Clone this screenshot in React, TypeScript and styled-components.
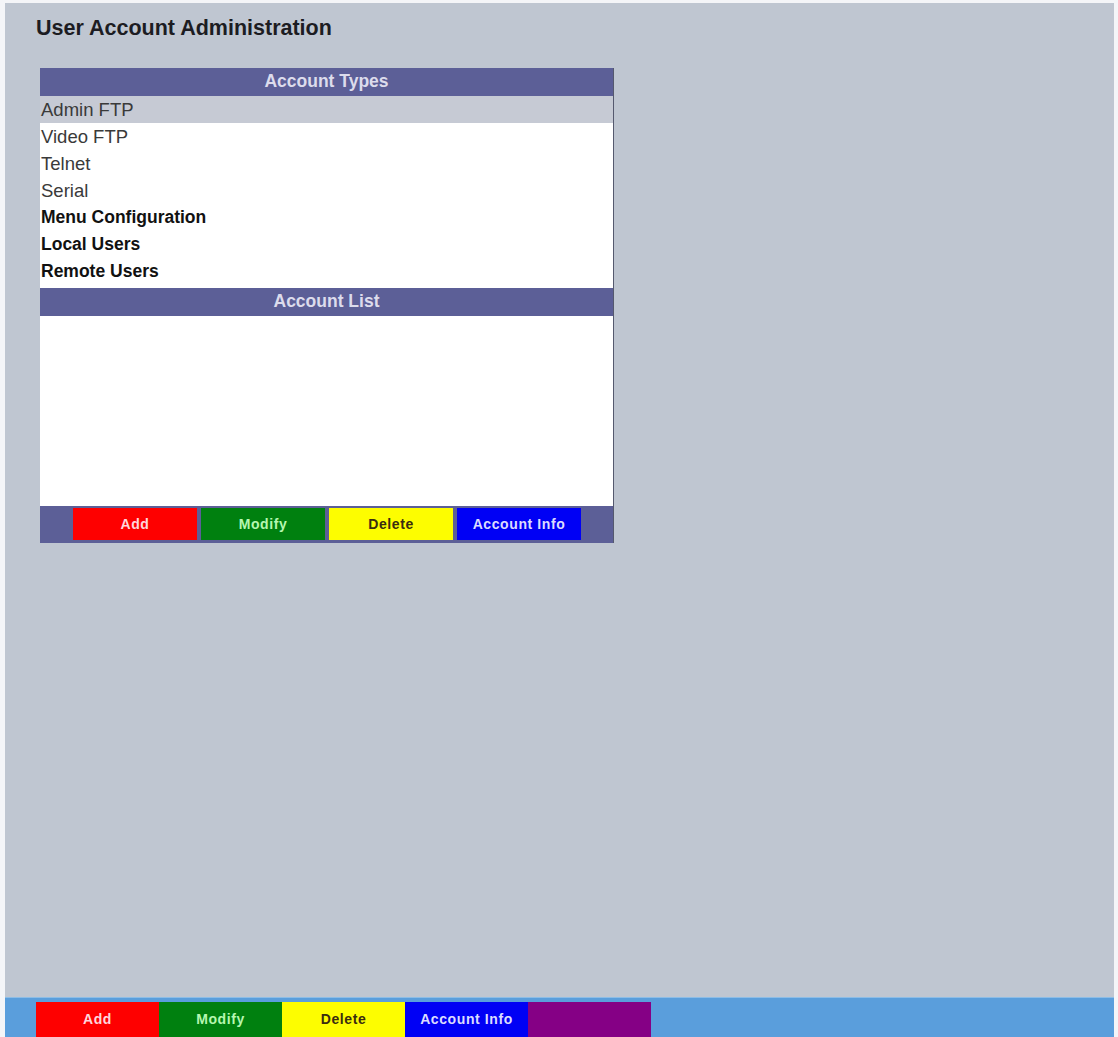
import styled, { createGlobalStyle } from "styled-components";

const GlobalStyle = createGlobalStyle`
  html, body {
    margin: 0;
    padding: 0;
    background: #f4f5f8;
  }
  body {
    font-family: "Liberation Sans", Arial, sans-serif;
  }
`;

type Tone = "red" | "green" | "yellow" | "blue" | "purple";

const tones: Record<Tone, { bg: string; fg: string }> = {
  red: { bg: "#fe0000", fg: "#ffd6dc" },
  green: { bg: "#00800f", fg: "#b6f7b0" },
  yellow: { bg: "#fdfd00", fg: "#3a2c10" },
  blue: { bg: "#0000f5", fg: "#dcdcff" },
  purple: { bg: "#850085", fg: "#ffffff" },
};

const accountTypes = [
  { label: "Admin FTP", bold: false, selected: true },
  { label: "Video FTP", bold: false },
  { label: "Telnet", bold: false },
  { label: "Serial", bold: false },
  { label: "Menu Configuration", bold: true },
  { label: "Local Users", bold: true },
  { label: "Remote Users", bold: true },
];

const actions: { label: string; tone: Tone }[] = [
  { label: "Add", tone: "red" },
  { label: "Modify", tone: "green" },
  { label: "Delete", tone: "yellow" },
  { label: "Account Info", tone: "blue" },
];

export default function App() {
  return (
    <Frame>
      <GlobalStyle />
      <Screen>
        <Content>
          <Title>User Account Administration</Title>
          <Panel>
            <SectionHeader>Account Types</SectionHeader>
            <TypeList>
              {accountTypes.map((t) => (
                <TypeRow key={t.label} $bold={t.bold} $selected={!!t.selected}>
                  {t.label}
                </TypeRow>
              ))}
            </TypeList>
            <SectionHeader>Account List</SectionHeader>
            <AccountArea />
            <ActionBar>
              {actions.map((a) => (
                <ActionButton key={a.label} $tone={a.tone}>
                  {a.label}
                </ActionButton>
              ))}
            </ActionBar>
          </Panel>
        </Content>
        <Footer>
          {actions.map((a) => (
            <FooterButton key={a.label} $tone={a.tone}>
              {a.label}
            </FooterButton>
          ))}
          <FooterButton $tone="purple" />
        </Footer>
      </Screen>
    </Frame>
  );
}

const Frame = styled.div`
  padding: 3px 4px 0 5px;
  height: 1037px;
  box-sizing: border-box;
`;

const Screen = styled.div`
  height: 100%;
  display: flex;
  flex-direction: column;
  background: #bfc6d1;
`;

const Content = styled.div`
  flex: 1;
  padding: 13px 0 0 31px;
`;

const Title = styled.h1`
  margin: 0;
  font-size: 21.5px;
  line-height: 24px;
  font-weight: bold;
  color: #1c1c22;
`;

const Panel = styled.div`
  margin: 28px 0 0 4px;
  width: 574px;
  background: #ffffff;
  border-right: 1px solid #55596e;
  box-sizing: border-box;
`;

const SectionHeader = styled.div`
  height: 28px;
  line-height: 26px;
  background: #5c5f97;
  color: #dcdcec;
  font-weight: bold;
  font-size: 17.5px;
  text-align: center;
`;

const TypeList = styled.div`
  display: flex;
  flex-direction: column;
  padding-bottom: 3px;
`;

const TypeRow = styled.div<{ $bold: boolean; $selected: boolean }>`
  height: 27px;
  line-height: 27px;
  padding-left: 1px;
  font-size: ${(p) => (p.$bold ? "17.5px" : "18.5px")};
  font-weight: ${(p) => (p.$bold ? "bold" : "normal")};
  color: ${(p) => (p.$bold ? "#111111" : "#3a3a3a")};
  background: ${(p) => (p.$selected ? "#c6cad4" : "#ffffff")};
`;

const AccountArea = styled.div`
  height: 190px;
  background: #ffffff;
`;

const ActionBar = styled.div`
  display: flex;
  gap: 4px;
  padding: 2px 0 3px 33px;
  background: #5c5f97;
`;

const ActionButton = styled.div<{ $tone: Tone }>`
  width: 124px;
  height: 32px;
  line-height: 32px;
  text-align: center;
  font-size: 14px;
  letter-spacing: 0.6px;
  font-weight: bold;
  background: ${(p) => tones[p.$tone].bg};
  color: ${(p) => tones[p.$tone].fg};
`;

const Footer = styled.div`
  height: 40px;
  display: flex;
  align-items: flex-end;
  padding-left: 31px;
  background: #5a9edc;
  border-top: 1px solid #8dbde6;
  box-sizing: border-box;
`;

const FooterButton = styled.div<{ $tone: Tone }>`
  width: 123px;
  height: 35px;
  line-height: 35px;
  text-align: center;
  font-size: 14px;
  letter-spacing: 0.6px;
  font-weight: bold;
  background: ${(p) => tones[p.$tone].bg};
  color: ${(p) => tones[p.$tone].fg};
`;
